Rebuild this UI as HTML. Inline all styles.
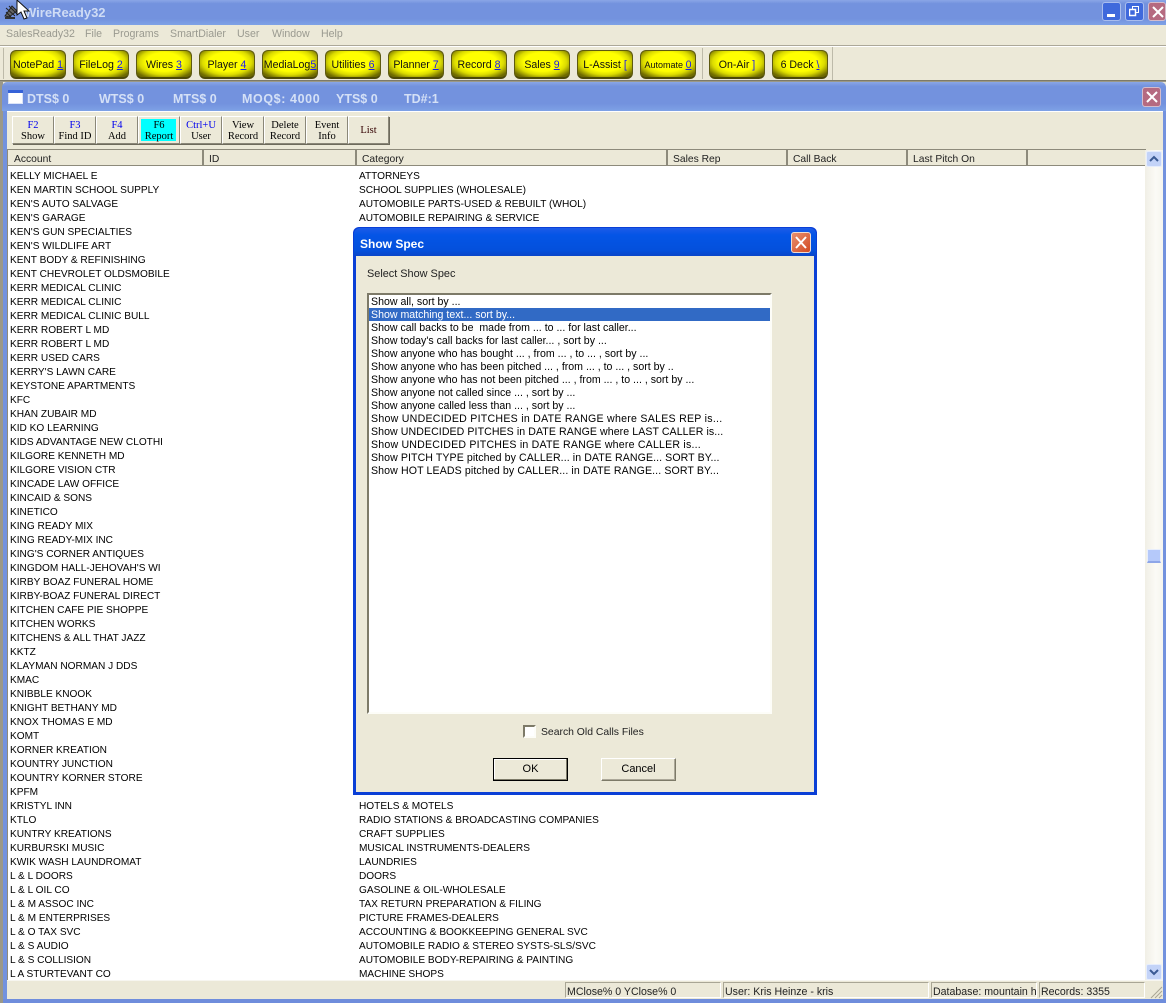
<!DOCTYPE html>
<html><head><meta charset="utf-8"><title>WireReady32</title>
<style>
html,body{margin:0;padding:0;background:#ECE9D8}
body{width:1166px;height:1003px;position:relative;overflow:hidden;font-family:"Liberation Sans",sans-serif;font-size:10.6px;color:#000}
.a{position:absolute}
.t{position:absolute;white-space:pre;line-height:14px}
.y{position:absolute;top:50px;width:56px;height:29px;border-radius:6px;box-sizing:border-box;background:radial-gradient(ellipse 34px 18px at 50% 42%,#ffff00 0,#ffff00 52%,#dcdc00 72%,#6e6a00 100%);border:1px solid #5e5a10;border-bottom:2px solid #4c4808;text-align:center;line-height:28px;font-size:10.6px;white-space:pre;color:#111}
.y u{color:#1a1af0}
.b{position:absolute;top:116px;width:42px;height:28px;box-sizing:border-box;background:#ECE9D8;border:1px solid;border-color:#fff #8a8778 #8a8778 #fff;box-shadow:1px 1px 0 #6d6a5c;text-align:center;font:10.5px/10.5px "Liberation Serif",serif;padding-top:4px;color:#000}
.b i{font-style:normal;color:#0000ee}
.h{position:absolute;top:150px;height:16px;box-sizing:border-box;border-right:2px solid #8d8a7b;padding-left:5px;line-height:20px;white-space:pre;color:#222;font-size:10.3px}
.col{position:absolute;top:170px;line-height:14px;white-space:pre;font-size:10.12px}
.sp{position:absolute;left:371px;top:296px;line-height:13px;white-space:pre}
.bar{background:linear-gradient(#8aa6e6 0,#7392de 15%,#7392de 75%,#7ea2e6 100%)}
.btn{position:absolute;top:758px;width:75px;height:23px;box-sizing:border-box;background:#ECE9D8;text-align:center;line-height:21px;font-size:11px}
.st{position:absolute;top:982px;height:16px;box-sizing:border-box;border:1px solid;border-color:#a9a695 #fff #fff #a9a695;line-height:18px;padding-left:1px;white-space:pre;overflow:hidden;color:#222}
.d{font-size:12.5px;line-height:16px;font-weight:bold;color:#d4e0f6;top:91px}
</style></head><body>

<!-- main title bar -->
<div class="a bar" style="left:0;top:0;width:1166px;height:25px"></div>
<div class="t" style="left:24px;top:4px;font-size:13px;line-height:17px;font-weight:bold;color:#cfdcf5">WireReady32</div>
<svg class="a" style="left:3px;top:3px" width="16" height="17" viewBox="0 0 16 17"><path d="M2 13 L9 3 L14 8 L6 14Z" fill="#666" stroke="#222"/><path d="M3 5L12 13M6 3L14 11M3 9L8 14" stroke="#222"/><rect x="2" y="14" width="10" height="2" fill="#333"/></svg>
<svg class="a" style="left:16px;top:0" width="14" height="21" viewBox="0 0 14 21"><path d="M1 0 L1 15 L5 12 L8 19 L11 18 L8 11 L13 11 Z" fill="#fff" stroke="#111"/></svg>
<div class="a" style="left:1102px;top:2px;width:19px;height:19px;border-radius:3px;background:#3f69dc;border:1px solid #a9bdee;box-sizing:border-box"><div class="a" style="left:4px;top:11px;width:8px;height:3px;background:#fff"></div></div>
<div class="a" style="left:1125px;top:2px;width:19px;height:19px;border-radius:3px;background:#3f69dc;border:1px solid #a9bdee;box-sizing:border-box"><svg class="a" style="left:3px;top:3px" width="12" height="12" fill="none" stroke="#fff"><rect x="3.5" y=".5" width="6" height="6"/><rect x=".5" y="3.5" width="6" height="6" fill="#3f69dc" stroke-width="1.5"/></svg></div>
<div class="a" style="left:1148px;top:2px;width:18px;height:19px;border-radius:3px;background:#b56a80;border:1px solid #d5bccb;box-sizing:border-box"><svg class="a" style="left:3px;top:3px" width="12" height="12" stroke="#fff" stroke-width="2"><path d="M1 1L11 11M11 1L1 11"/></svg></div>

<!-- menu -->
<div class="t" style="left:6px;top:27px;color:#9a9a90">SalesReady32</div>
<div class="t" style="left:85px;top:27px;color:#9a9a90">File</div>
<div class="t" style="left:113px;top:27px;color:#9a9a90">Programs</div>
<div class="t" style="left:170px;top:27px;color:#9a9a90">SmartDialer</div>
<div class="t" style="left:237px;top:27px;color:#9a9a90">User</div>
<div class="t" style="left:272px;top:27px;color:#9a9a90">Window</div>
<div class="t" style="left:321px;top:27px;color:#9a9a90">Help</div>

<!-- toolbar -->
<div class="a" style="left:0;top:45px;width:1166px;height:1px;background:#aca899"></div>
<div class="a" style="left:0;top:46px;width:1166px;height:1px;background:#fff"></div>
<div class="a" style="left:3px;top:48px;width:1px;height:31px;background:#bdbaa9"></div>
<div class="y" style="left:10px">NotePad <u>1</u></div>
<div class="y" style="left:73px">FileLog <u>2</u></div>
<div class="y" style="left:136px">Wires <u>3</u></div>
<div class="y" style="left:199px">Player <u>4</u></div>
<div class="y" style="left:262px">MediaLog<u>5</u></div>
<div class="y" style="left:325px">Utilities <u>6</u></div>
<div class="y" style="left:388px">Planner <u>7</u></div>
<div class="y" style="left:451px">Record <u>8</u></div>
<div class="y" style="left:514px">Sales <u>9</u></div>
<div class="y" style="left:577px">L-Assist <u>[</u></div>
<div class="y" style="left:640px;font-size:9px">Automate <u style="font-size:10.6px">0</u></div>
<div class="a" style="left:702px;top:48px;width:1px;height:31px;background:#bdbaa9"></div>
<div class="y" style="left:709px">On-Air <u>]</u></div>
<div class="y" style="left:772px">6 Deck <u>\</u></div>
<div class="a" style="left:832px;top:47px;width:1px;height:33px;background:#bdbaa9"></div>

<!-- child window frame -->
<div class="a" style="left:0;top:80px;width:1166px;height:1px;background:#7d7a68"></div>
<div class="a" style="left:0;top:81px;width:1166px;height:1px;background:#9b9888"></div>
<div class="a" style="left:0;top:82px;width:3px;height:921px;background:#9b9888"></div>
<div class="a bar" style="left:2px;top:82px;width:1164px;height:29px;border-radius:5px 5px 0 0"></div>
<div class="a" style="left:3px;top:111px;width:4px;height:892px;background:#7392de"></div>
<div class="a" style="left:1163px;top:111px;width:3px;height:892px;background:#7392de"></div>
<div class="a" style="left:3px;top:999px;width:1163px;height:4px;background:#6f8ddc"></div>
<div class="a" style="left:7px;top:111px;width:1156px;height:1px;background:#fff"></div>
<svg class="a" style="left:8px;top:90px" width="15" height="14"><rect x=".5" y=".5" width="14" height="13" fill="#fff" stroke="#dbe4f8"/><rect x="0" y="0" width="15" height="3" fill="#3562d8"/></svg>
<div class="t d" style="left:27px">DTS$ 0</div>
<div class="t d" style="left:99px">WTS$ 0</div>
<div class="t d" style="left:173px">MTS$ 0</div>
<div class="t d" style="left:242px;letter-spacing:.6px">MOQ$: 4000</div>
<div class="t d" style="left:336px">YTS$ 0</div>
<div class="t d" style="left:404px">TD#:1</div>
<div class="a" style="left:1142px;top:87px;width:19px;height:20px;border-radius:3px;background:#b56a80;border:1px solid #d5bccb;box-sizing:border-box"><svg class="a" style="left:3px;top:3px" width="12" height="12" stroke="#fff" stroke-width="2"><path d="M1 1L11 11M11 1L1 11"/></svg></div>

<!-- child buttons -->
<div class="b" style="left:12px"><i>F2</i><br>Show</div>
<div class="b" style="left:54px"><i>F3</i><br>Find ID</div>
<div class="b" style="left:96px"><i>F4</i><br>Add</div>
<div class="b" style="left:138px"><div class="a" style="left:2px;top:2px;width:35px;height:22px;background:#00ffff"></div><div style="position:relative">F6<br>Report</div></div>
<div class="b" style="left:180px"><i>Ctrl+U</i><br>User</div>
<div class="b" style="left:222px">View<br>Record</div>
<div class="b" style="left:264px">Delete<br>Record</div>
<div class="b" style="left:306px">Event<br>Info</div>
<div class="b" style="left:348px;width:41px;padding-top:9px;color:#300">List</div>

<!-- list area -->
<div class="a" style="left:7px;top:149px;width:1139px;height:1px;background:#8d8a7b"></div>
<div class="a" style="left:7px;top:149px;width:1px;height:832px;background:#8d8a7b"></div>
<div class="a" style="left:8px;top:166px;width:1138px;height:814px;background:#fff"></div>
<div class="a" style="left:8px;top:165px;width:1138px;height:1px;background:#8d8a7b"></div>
<div class="h" style="left:8px;width:196px;padding-left:6px">Account</div>
<div class="h" style="left:204px;width:153px">ID</div>
<div class="h" style="left:357px;width:311px">Category</div>
<div class="h" style="left:668px;width:120px">Sales Rep</div>
<div class="h" style="left:788px;width:120px">Call Back</div>
<div class="h" style="left:908px;width:120px">Last Pitch On</div>

<div class="col" style="left:10px">KELLY MICHAEL E
KEN MARTIN SCHOOL SUPPLY
KEN'S AUTO SALVAGE
KEN'S GARAGE
KEN'S GUN SPECIALTIES
KEN'S WILDLIFE ART
KENT BODY &amp; REFINISHING
KENT CHEVROLET OLDSMOBILE
KERR MEDICAL CLINIC
KERR MEDICAL CLINIC
KERR MEDICAL CLINIC BULL
KERR ROBERT L MD
KERR ROBERT L MD
KERR USED CARS
KERRY'S LAWN CARE
KEYSTONE APARTMENTS
KFC
KHAN ZUBAIR MD
KID KO LEARNING
KIDS ADVANTAGE NEW CLOTHI
KILGORE KENNETH MD
KILGORE VISION CTR
KINCADE LAW OFFICE
KINCAID &amp; SONS
KINETICO
KING READY MIX
KING READY-MIX INC
KING'S CORNER ANTIQUES
KINGDOM HALL-JEHOVAH'S WI
KIRBY BOAZ FUNERAL HOME
KIRBY-BOAZ FUNERAL DIRECT
KITCHEN CAFE PIE SHOPPE
KITCHEN WORKS
KITCHENS &amp; ALL THAT JAZZ
KKTZ
KLAYMAN NORMAN J DDS
KMAC
KNIBBLE KNOOK
KNIGHT BETHANY MD
KNOX THOMAS E MD
KOMT
KORNER KREATION
KOUNTRY JUNCTION
KOUNTRY KORNER STORE
KPFM
KRISTYL INN
KTLO
KUNTRY KREATIONS
KURBURSKI MUSIC
KWIK WASH LAUNDROMAT
L &amp; L DOORS
L &amp; L OIL CO
L &amp; M ASSOC INC
L &amp; M ENTERPRISES
L &amp; O TAX SVC
L &amp; S AUDIO
L &amp; S COLLISION
L A STURTEVANT CO</div>

<div class="col" style="left:359px">ATTORNEYS
SCHOOL SUPPLIES (WHOLESALE)
AUTOMOBILE PARTS-USED &amp; REBUILT (WHOL)
AUTOMOBILE REPAIRING &amp; SERVICE</div>
<div class="col" style="left:359px;top:800px">HOTELS &amp; MOTELS
RADIO STATIONS &amp; BROADCASTING COMPANIES
CRAFT SUPPLIES
MUSICAL INSTRUMENTS-DEALERS
LAUNDRIES
DOORS
GASOLINE &amp; OIL-WHOLESALE
TAX RETURN PREPARATION &amp; FILING
PICTURE FRAMES-DEALERS
ACCOUNTING &amp; BOOKKEEPING GENERAL SVC
AUTOMOBILE RADIO &amp; STEREO SYSTS-SLS/SVC
AUTOMOBILE BODY-REPAIRING &amp; PAINTING
MACHINE SHOPS</div>

<!-- scrollbar -->
<div class="a" style="left:1145px;top:150px;width:18px;height:830px;background:linear-gradient(90deg,#f1efe6,#fbfaf6 60%,#f6f5ee)"></div>
<div class="a" style="left:1146px;top:151px;width:16px;height:16px;background:#c3d3f8;border:1px solid #e6edfc;box-sizing:border-box;border-radius:2px"><svg class="a" style="left:2px;top:3px" width="10" height="8" fill="none" stroke="#3a5a94" stroke-width="2"><path d="M1 6L5 2L9 6"/></svg></div>
<div class="a" style="left:1147px;top:549px;width:14px;height:14px;background:#b5c9fa;border:1px solid #e8eefc;border-bottom:2px solid #8ea6e8;box-sizing:border-box"></div>
<div class="a" style="left:1146px;top:964px;width:16px;height:16px;background:#c3d3f8;border:1px solid #e6edfc;box-sizing:border-box;border-radius:2px"><svg class="a" style="left:2px;top:3px" width="10" height="8" fill="none" stroke="#3a5a94" stroke-width="2"><path d="M1 2L5 6L9 2"/></svg></div>

<!-- status -->
<div class="a" style="left:7px;top:980px;width:1156px;height:1px;background:#f7f6f0"></div>
<div class="st" style="left:565px;width:156px">MClose% 0 YClose% 0</div>
<div class="st" style="left:723px;width:206px">User: Kris Heinze - kris</div>
<div class="st" style="left:931px;width:106px">Database: mountain h</div>
<div class="st" style="left:1039px;width:106px">Records: 3355</div>
<svg class="a" style="left:1150px;top:986px" width="13" height="13" stroke="#a9a695"><path d="M12 1L1 12M12 5L5 12M12 9L9 12"/></svg>

<!-- dialog -->
<div class="a" style="left:353px;top:227px;width:464px;height:568px;background:#0a3fd6;border-radius:6px 6px 0 0"></div>
<div class="a" style="left:354px;top:228px;width:462px;height:28px;background:linear-gradient(#1d5ce8 0,#0455e6 25%,#0450dc 80%,#0a46c8 100%);border-radius:6px 6px 0 0"></div>
<div class="t" style="left:360px;top:236px;font-size:12px;line-height:16px;font-weight:bold;color:#fff">Show Spec</div>
<div class="a" style="left:791px;top:232px;width:20px;height:21px;border-radius:3px;background:linear-gradient(135deg,#e89070,#d24a22);border:1px solid #f0dcd0;box-sizing:border-box"><svg class="a" style="left:3px;top:3px" width="12" height="13" stroke="#fff" stroke-width="2"><path d="M1 1L11 12M11 1L1 12"/></svg></div>
<div class="a" style="left:356px;top:256px;width:458px;height:536px;background:#ECE9D8"></div>
<div class="t" style="left:367px;top:267px;color:#222;font-size:10.9px">Select Show Spec</div>
<div class="a" style="left:367px;top:293px;width:405px;height:421px;box-sizing:border-box;background:#fff;border:2px solid;border-color:#7d7a68 #fdfdf8 #fdfdf8 #7d7a68"></div>
<div class="a" style="left:369px;top:308px;width:401px;height:13px;background:#316AC5"></div>
<div class="sp">Show all, sort by ...
<span style="color:#fff">Show matching text... sort by...</span>
Show call backs to be  made from ... to ... for last caller...
Show today's call backs for last caller... , sort by ...
Show anyone who has bought ... , from ... , to ... , sort by ...
Show anyone who has been pitched ... , from ... , to ... , sort by ..
Show anyone who has not been pitched ... , from ... , to ... , sort by ...
Show anyone not called since ... , sort by ...
Show anyone called less than ... , sort by ...
<span style="letter-spacing:.26px">Show UNDECIDED PITCHES in DATE RANGE where SALES REP is...</span>
<span style="letter-spacing:.07px">Show UNDECIDED PITCHES in DATE RANGE where LAST CALLER is...</span>
<span style="letter-spacing:.2px">Show UNDECIDED PITCHES in DATE RANGE where CALLER is...</span>
<span style="letter-spacing:.08px">Show PITCH TYPE pitched by CALLER... in DATE RANGE... SORT BY...</span>
<span style="letter-spacing:.11px">Show HOT LEADS pitched by CALLER... in DATE RANGE... SORT BY...</span></div>
<div class="a" style="left:523px;top:725px;width:13px;height:13px;box-sizing:border-box;background:#fff;border:2px solid;border-color:#7d7a68 #fdfdf8 #fdfdf8 #7d7a68"></div>
<div class="t" style="left:541px;top:726px;color:#222;font-size:10.4px">Search Old Calls Files</div>
<div class="btn" style="left:493px;border:1px solid #000;box-shadow:inset -1px -1px 0 #7d7a68,inset 1px 1px 0 #fff">OK</div>
<div class="btn" style="left:601px;border:1px solid;border-color:#fff #7d7a68 #7d7a68 #fff;box-shadow:inset -1px -1px 0 #aca899">Cancel</div>
</body></html>
